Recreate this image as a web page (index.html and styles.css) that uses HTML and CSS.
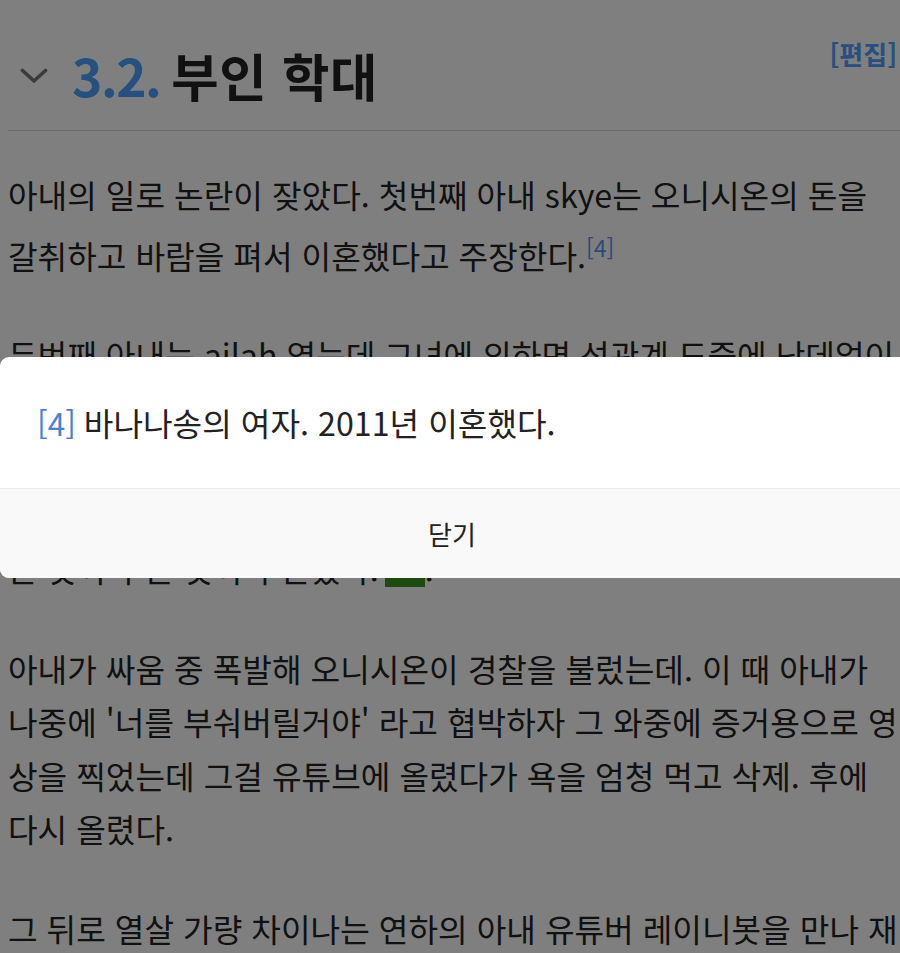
FILE: index.html
```html
<!DOCTYPE html>
<html lang="ko">
<head>
<meta charset="utf-8">
<title>부인 학대</title>
<link rel="stylesheet" href="styles.css">
</head>
<body>
<main class="page">
  <div class="heading">
    <h2 class="title">
      <svg class="chev" width="28" height="16" viewBox="0 0 28 16" aria-hidden="true"><path d="M2.5 2.5 L14 13 L25.5 2.5"/></svg>
      <span class="num">3.2.</span>
      <span class="name">부인 학대</span>
    </h2>
    <a class="edit" href="#">[편집]</a>
  </div>
  <p class="para">아내의 일로 논란이 잦았다. 첫번째 아내 skye는 오니시온의 돈을 갈취하고 바람을 펴서 이혼했다고 주장한다.<sup class="ref"><a href="#">[4]</a></sup></p>
  <p class="para">두번째 아내는 ailah 였는데 그녀에 의하면 성관계 도중에 난데없이 목을 조르고 뺨을 때렸으며 이후에도 자신을 위협하고 폭력을 휘둘렀다고 주장했다. 이에 대해 오니시온은 사실이 아니라고 반박했지만 주변 사람들의 증언이 이어지면서 그녀가 말하<br>는 것이라 는 것이라 는했다. <span class="mark"></span>.</p>
  <p class="para">아내가 싸움 중 폭발해 오니시온이 경찰을 불렀는데. 이 때 아내가 나중에 '너를 부숴버릴거야' 라고 협박하자 그 와중에 증거용으로 영상을 찍었는데 그걸 유튜브에 올렸다가 욕을 엄청 먹고 삭제. 후에 다시 올렸다.</p>
  <p class="para">그 뒤로 열살 가량 차이나는 연하의 아내 유튜버 레이니봇을 만나 재혼했다.</p>
</main>
<div class="backdrop"></div>
<div class="modal">
  <div class="modal-body"><a class="fn" href="#">[4]</a> 바나나송의 여자. 2011년 이혼했다.</div>
  <div class="modal-foot"><button class="close" type="button">닫기</button></div>
</div>
</body>
</html>
```
FILE: styles.css
```css
html, body {
  margin: 0;
  padding: 0;
}
body {
  position: relative;
  width: 900px;
  height: 953px;
  overflow: hidden;
  background: #ffffff;
  color: #222222;
  font-family: "Noto Sans CJK KR", "Noto Sans", sans-serif;
}
a {
  text-decoration: none;
}
.page {
  padding: 0 0 0 8px;
}
.heading {
  display: flex;
  justify-content: space-between;
  align-items: flex-start;
  padding: 36px 3px 23px 12px;
  border-bottom: 1px solid #d6d6d6;
}
.title {
  display: flex;
  align-items: center;
  gap: 11px;
  margin: 7px 0 0;
  font-size: 51.5px;
  line-height: 64px;
  font-weight: 700;
  color: #222222;
}
.chev {
  margin-right: 13px;
  margin-top: 2px;
}
.chev path {
  fill: none;
  stroke: #767676;
  stroke-width: 3.6;
  stroke-linecap: round;
  stroke-linejoin: round;
}
.num {
  color: #4aa0ff;
  letter-spacing: -1.5px;
}
.name {
  letter-spacing: 0.5px;
}
.edit {
  font-size: 26px;
  line-height: 36px;
  font-weight: 700;
  color: #4aa0ff;
}
.para {
  margin: 46px 0 0;
  font-size: 32.2px;
  line-height: 53.5px;
}
.heading + .para {
  margin-top: 37px;
}
.ref {
  font-size: 23px;
  line-height: 50px;
  vertical-align: 12px;
}
.ref a {
  color: #5a96f0;
}
.mark {
  display: inline-block;
  width: 40px;
  height: 24px;
  margin-left: -3px;
  background: #3e941e;
  vertical-align: -5px;
}
.backdrop {
  position: absolute;
  inset: 0;
  background: rgba(0, 0, 0, 0.5);
}
.modal {
  position: absolute;
  top: 357px;
  left: 0;
  width: 912px;
  border-radius: 9px;
  overflow: hidden;
  background: #ffffff;
}
.modal-body {
  box-sizing: border-box;
  height: 132px;
  padding: 0 0 2px 37px;
  display: flex;
  align-items: center;
  gap: 8px;
  font-size: 32.2px;
  color: #222222;
  border-bottom: 1px solid #ebebeb;
}
.fn {
  color: #4a80d0;
  font-size: 31.5px;
}
.modal-foot {
  height: 89px;
  display: flex;
  align-items: center;
  justify-content: center;
  background: #f9f9f9;
  padding-right: 8px;
}
.close {
  border: 0;
  background: none;
  padding: 0;
  font-family: inherit;
  font-size: 26px;
  color: #222222;
}
```
